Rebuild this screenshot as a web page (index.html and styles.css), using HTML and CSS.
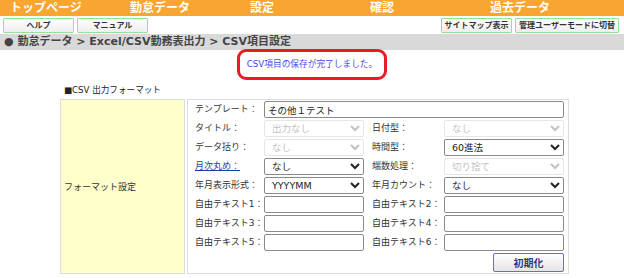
FILE: index.html
```html
<!DOCTYPE html>
<html lang="ja">
<head>
    <meta charset="UTF-8">
    <meta name="viewport" content="width=device-width, initial-scale=1.0">
    <title>CSV項目設定</title>
    <link rel="stylesheet" href="styles.css">
</head>
<body>
    <nav class="global-nav">
        <a href="#">トップページ</a>
        <a href="#">勤怠データ</a>
        <a href="#">設定</a>
        <a href="#">確認</a>
        <a href="#">過去データ</a>
    </nav>
    <div class="toolbar">
        <div class="toolbar-group">
            <button class="tool-btn help">ヘルプ</button>
            <button class="tool-btn help">マニュアル</button>
        </div>
        <div class="toolbar-group">
            <button class="tool-btn sitemap">サイトマップ表示</button>
            <button class="tool-btn admin">管理ユーザーモードに切替</button>
        </div>
    </div>
    <div class="breadcrumb">● 勤怠データ &gt; Excel/CSV勤務表出力 &gt; CSV項目設定</div>

    <div class="message-wrap">
        <p class="message">CSV項目の保存が完了しました。</p>
    </div>

    <div class="section">
        <h2 class="section-title">■CSV 出力フォーマット</h2>
        <table class="format-table">
            <tr>
                <th>フォーマット設定</th>
                <td>
                    <div class="form-grid">
                        <label>テンプレート：</label>
                        <input class="wide" type="text" value="その他１テスト">

                        <label>タイトル：</label>
                        <select disabled><option>出力なし</option></select>
                        <label class="right">日付型：</label>
                        <select disabled><option>なし</option></select>

                        <label>データ括り：</label>
                        <select disabled><option>なし</option></select>
                        <label class="right">時間型：</label>
                        <select><option>60進法</option></select>

                        <label><a href="#">月次丸め：</a></label>
                        <select><option>なし</option></select>
                        <label class="right">端数処理：</label>
                        <select disabled><option>切り捨て</option></select>

                        <label>年月表示形式：</label>
                        <select><option>YYYYMM</option></select>
                        <label class="right">年月カウント：</label>
                        <select><option>なし</option></select>

                        <label>自由テキスト1：</label>
                        <input type="text">
                        <label class="right">自由テキスト2：</label>
                        <input type="text">

                        <label>自由テキスト3：</label>
                        <input type="text">
                        <label class="right">自由テキスト4：</label>
                        <input type="text">

                        <label>自由テキスト5：</label>
                        <input type="text">
                        <label class="right">自由テキスト6：</label>
                        <input type="text">
                    </div>
                    <div class="form-actions">
                        <button class="reset-btn">初期化</button>
                    </div>
                </td>
            </tr>
        </table>
    </div>
</body>
</html>
```

FILE: styles.css
```css
body {
    margin: 0;
    font-family: "DejaVu Sans", "Noto Sans CJK JP", sans-serif;
    font-size: 9px;
    color: #333;
    background-color: #fff;
}
.global-nav {
    display: grid;
    grid-template-columns: repeat(5, 120px);
    height: 16px;
    padding-left: 10px;
    background-color: #f9a532;
}
.global-nav a {
    color: #fff;
    font-size: 12px;
    font-weight: bold;
    line-height: 16px;
    text-decoration: none;
}
.toolbar {
    display: flex;
    justify-content: space-between;
    padding: 2px 5px 1px 3px;
}
.toolbar-group {
    display: flex;
    gap: 3px;
}
.tool-btn {
    height: 15px;
    padding: 0;
    border: 1px solid #94e294;
    border-radius: 1px;
    background: linear-gradient(#ffffff, #eeeeee);
    font-family: inherit;
    font-size: 8px;
    font-weight: bold;
    color: #333;
    line-height: 13px;
    white-space: nowrap;
}
.tool-btn.help {
    width: 71px;
}
.tool-btn.sitemap {
    width: 71px;
}
.tool-btn.admin {
    width: 104px;
}
.breadcrumb {
    height: 16px;
    padding-left: 4px;
    background-color: #d9d9d9;
    font-size: 11px;
    font-weight: bold;
    line-height: 16px;
    color: #444;
}
.message-wrap {
    display: flex;
    justify-content: center;
}
.message {
    width: 144px;
    height: 25px;
    margin: -1px 0 0;
    border: 3px solid #e81c24;
    border-radius: 9px;
    font-size: 8.7px;
    line-height: 25px;
    text-align: center;
    color: #4646f2;
}
.section {
    margin: 4px 0 0 58px;
    width: 513px;
}
.section-title {
    margin: 0 0 1px 6px;
    font-size: 8.6px;
    font-weight: normal;
    line-height: 12px;
    color: #222;
}
.format-table {
    width: 513px;
    table-layout: fixed;
    border-spacing: 2px;
}
.format-table th {
    width: 117px;
    padding: 0 3px;
    border: 1px solid #dcdcdc;
    background-color: #ffffcc;
    font-weight: normal;
    text-align: left;
    vertical-align: middle;
}
.format-table td {
    padding: 1px 4px 1px 7px;
    border: 1px solid #dcdcdc;
}
.form-grid {
    display: grid;
    grid-template-columns: 69px 100px 80px 120px;
    row-gap: 2px;
    align-items: center;
}
.form-grid label {
    line-height: 17px;
    white-space: nowrap;
}
.form-grid label.right {
    padding-left: 8px;
}
.form-grid a {
    color: #1a3ea8;
}
.form-grid input,
.form-grid select {
    box-sizing: border-box;
    height: 17px;
    margin: 0;
    padding: 0 3px;
    border: 1px solid #8a8a8a;
    border-radius: 2px;
    font-family: inherit;
    font-size: 9.5px;
    color: #222;
    background-color: #fff;
}
.form-grid select:disabled {
    border-color: #dcdcdc;
    color: #a8a8a8;
}
.form-grid .wide {
    grid-column: 2 / 5;
}
.form-actions {
    display: flex;
    justify-content: flex-end;
    margin-top: 2px;
}
.reset-btn {
    width: 71px;
    height: 19px;
    border: 1px solid #7066d8;
    border-radius: 2px;
    background: linear-gradient(#ffffff, #e4e4e4);
    font-family: inherit;
    font-size: 10px;
    font-weight: bold;
    color: #33338a;
}
```
